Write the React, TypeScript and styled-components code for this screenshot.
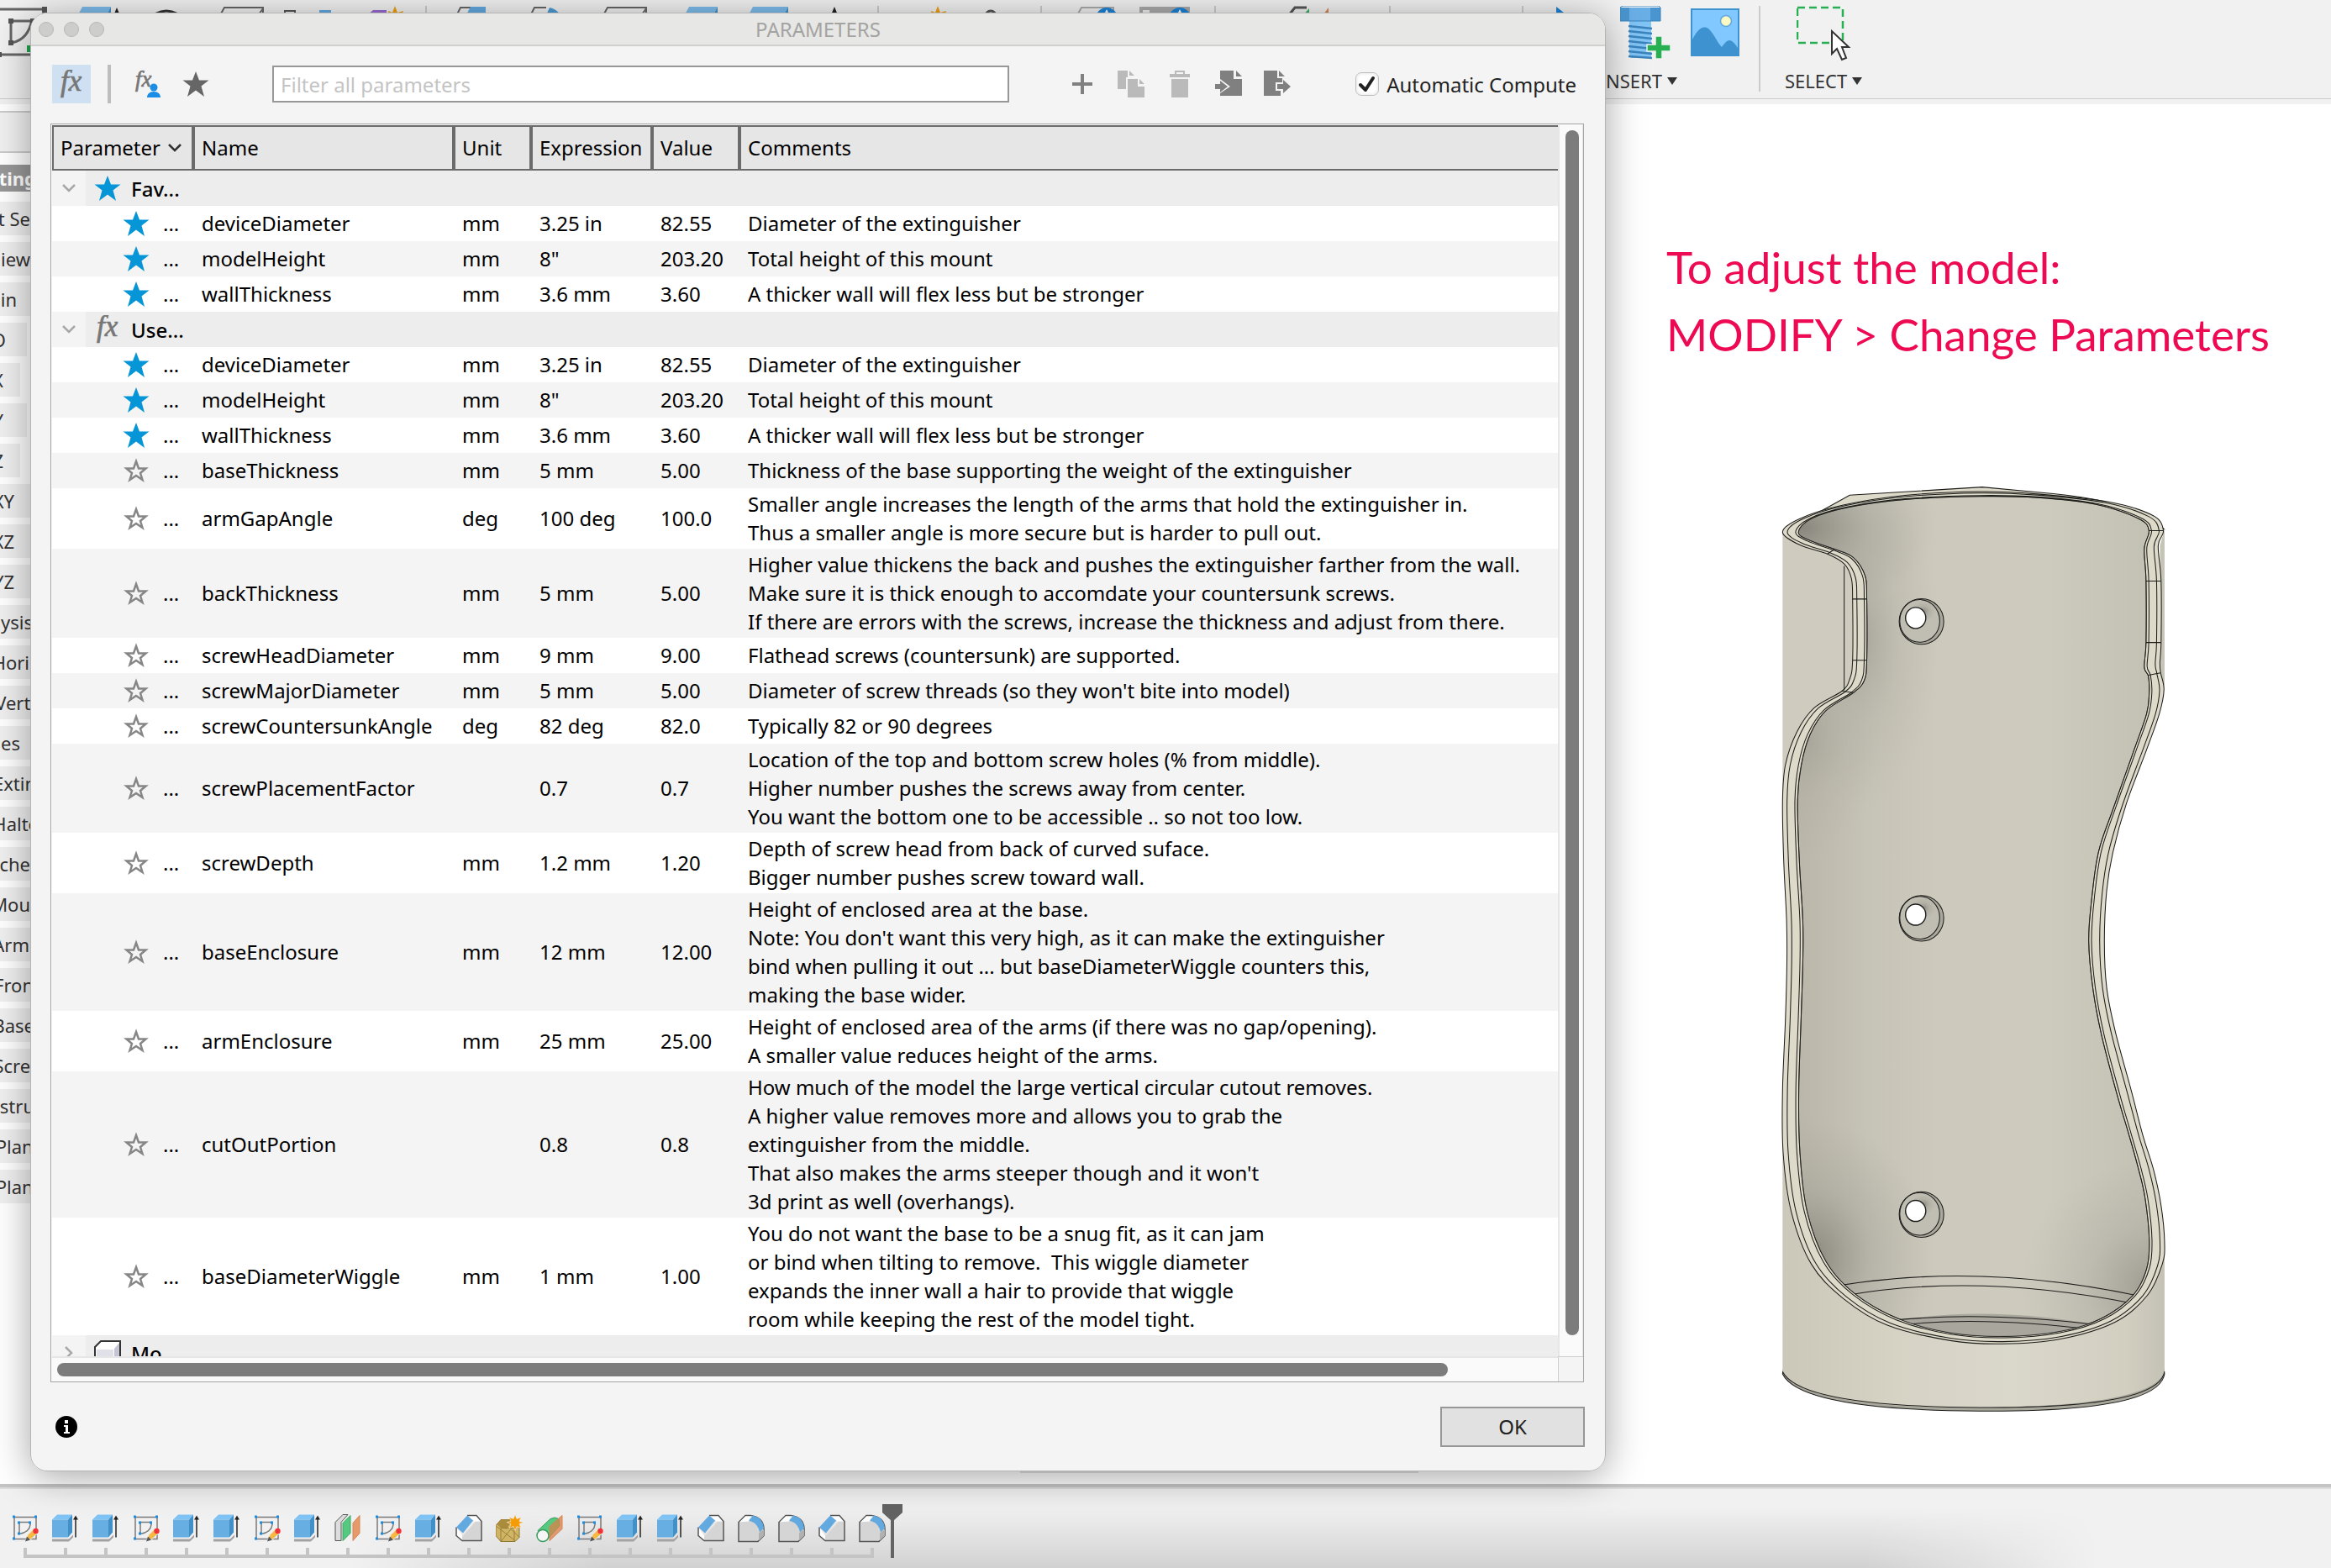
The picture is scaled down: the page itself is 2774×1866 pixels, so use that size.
import React from 'react';
import styled, { createGlobalStyle, css } from 'styled-components';

const sans = "'Noto Sans', 'Open Sans', sans-serif";

const GlobalStyle = createGlobalStyle`
  *, *::before, *::after { box-sizing: border-box; }
  html, body { margin: 0; height: 100%; overflow: hidden; }
  body { font-family: ${sans}; font-size: 22px; color: #000; background: #fff; }
  button, input { font: inherit; color: inherit; }
`;

/* ---------- application shell ---------- */

const Shell = styled.div`
  position: relative;
  display: flex;
  flex-direction: column;
  height: 100vh;
  overflow: hidden;
  background: #fff;
`;

const Ribbon = styled.header`
  display: flex;
  flex: none;
  height: 124px;
  background: linear-gradient(#f1f1f1 117px, #cbcbcb 117px, #cbcbcb 118px, #f1f1f1 118px);
`;

const HiddenTools = styled.div`
  display: flex;
  align-items: flex-start;
  width: 1911px;
  flex: none;
  padding-top: 7px;
  overflow: hidden;
  border-top: 0;
`;

const ToolIcon = styled.svg<{ $gap: number }>`
  flex: none;
  margin-left: ${(p) => p.$gap}px;
  display: block;
`;

const ToolGroup = styled.div<{ $divided?: boolean }>`
  display: flex;
  flex-direction: column;
  align-items: flex-start;
  height: 102px;
  margin-top: 7px;
  ${(p) =>
    p.$divided &&
    css`
      margin-left: 23px;
      padding-left: 29px;
      border-left: 2px solid #cbcbcb;
    `}
`;

const GroupIcons = styled.div<{ $indent: number }>`
  display: flex;
  gap: 22px;
  height: 76px;
  padding-left: ${(p) => p.$indent}px;
`;

const GroupMenu = styled.button`
  display: flex;
  align-items: center;
  gap: 6px;
  padding: 0;
  border: 0;
  background: none;
  color: #333;
  font-size: 22px;
  line-height: 26px;
`;

const Caret = styled.span`
  border: 6px solid transparent;
  border-top: 9px solid #333;
  border-bottom: 0;
`;

const Stage = styled.main`
  display: flex;
  flex: 1;
  min-height: 0;
`;

const Browser = styled.aside`
  display: flex;
  flex-direction: column;
  gap: 8px;
  width: 1911px;
  flex: none;
  padding-top: 8px;
`;

const BrowserBar = styled.div`
  height: 50px;
  margin-bottom: 6px;
  border: solid #cbcbcb;
  border-width: 2px 0;
  background: #f1f1f1;
`;

const BrowserNode = styled.div<{ $end: number; $active?: boolean; $width?: number }>`
  display: flex;
  width: ${(p) => p.$width ?? 60}px;
  height: ${(p) => (p.$active ? 32 : 40)}px;
  margin: ${(p) => (p.$active ? '0 0 4px' : 0)};
  overflow: hidden;
  background: ${(p) => (p.$active ? '#989898' : '#f0f0f0')};
  color: ${(p) => (p.$active ? '#fff' : '#333')};
  font-weight: ${(p) => (p.$active ? 700 : 400)};
  line-height: ${(p) => (p.$active ? 32 : 40)}px;

  span {
    display: flex;
    justify-content: flex-end;
    flex: none;
    width: ${(p) => p.$end}px;
    white-space: nowrap;
  }
`;

const Viewport = styled.section`
  flex: 1;
  padding: 154px 0 0 72px;
`;

const Annotation = styled.p`
  margin: 0;
  color: #ed0a53;
  font-family: Lato, sans-serif;
  font-size: 53px;
  line-height: 80px;
  white-space: nowrap;
`;

const ModelFrame = styled.div`
  width: 540px;
  margin: 122px 0 0 97px;
`;

/* ---------- timeline ---------- */

const Timeline = styled.footer`
  position: relative;
  flex: none;
  height: 100px;
  border-top: 4px solid #c4c4c4;
  background: linear-gradient(#dcdcdc 2px, #f1f1f1 2px);

  &::before {
    content: '';
    position: absolute;
    inset: 24px 0 0;
    background: linear-gradient(transparent, rgba(0, 0, 0, 0.13));
    mask-image: linear-gradient(90deg, transparent 15%, #000 26%, #000 80%, transparent 90%);
  }
`;

const TimelineTrack = styled.ol`
  position: relative;
  display: flex;
  margin: 0;
  padding: 32px 0 0 6px;
  list-style: none;
`;

const Feature = styled.li<{ $edge?: 'first' | 'last' }>`
  display: flex;
  flex-direction: column;
  align-items: center;
  gap: 6px;
  width: 48px;
  height: 52px;
  background: linear-gradient(#c4c4c4, #c4c4c4) no-repeat bottom
    ${(p) => (p.$edge === 'first' ? 'right' : 'left')} / ${(p) => (p.$edge ? '26px' : '100%')} 4px;

  &::after {
    content: '';
    width: 4px;
    height: 12px;
    background: #c4c4c4;
  }
`;

const Playhead = styled.li`
  width: 24px;
  height: 64px;
  margin: -12px 0 0 -12px;
`;

/* ---------- parameters window ---------- */

const Dialog = styled.section`
  position: absolute;
  z-index: 2;
  top: 15px;
  bottom: 115px;
  left: 36px;
  display: flex;
  flex-direction: column;
  width: 1875px;
  overflow: hidden;
  border: 1px solid #b4b4b4;
  border-radius: 20px;
  background: #f4f4f4;
  font-size: 24px;
`;

const DialogShadow = styled.div`
  position: absolute;
  z-index: 1;
  top: 15px;
  bottom: 115px;
  left: 36px;
  width: 1875px;
  border-radius: 20px;
  box-shadow: 0 6px 46px rgba(0, 0, 0, 0.36);
`;

const NavigationBar = styled.div`
  position: absolute;
  bottom: 113px;
  left: 1214px;
  width: 474px;
  height: 40px;
  background: #e2e2e2;
`;

const TitleBar = styled.header`
  display: grid;
  grid-template-columns: 1fr auto 1fr;
  align-items: center;
  flex: none;
  height: 39px;
  padding: 0 9px;
  border-bottom: 2px solid #d0d0cf;
  background: #e7e7e5;
`;

const Lights = styled.div`
  display: flex;
  gap: 12px;

  button {
    width: 18px;
    height: 18px;
    padding: 0;
    border: 1px solid #b7b7b6;
    border-radius: 50%;
    background: #cdcdcc;
  }
`;

const Title = styled.h1`
  margin: 0;
  color: #a3a3a2;
  font-size: 24px;
  font-weight: 400;
  line-height: 30px;
`;

const Toolbar = styled.div`
  display: flex;
  align-items: center;
  flex: none;
  height: 92px;
  padding: 0 34px 2px 25px;
`;

const IconButton = styled.button<{ $selected?: boolean }>`
  display: grid;
  place-items: center;
  width: 46px;
  height: 46px;
  padding: 0;
  border: 0;
  background: ${(p) => (p.$selected ? '#cee0f2' : 'transparent')};
`;

const ButtonRow = styled.div`
  display: flex;
  gap: 12px;
`;

const Divider = styled.span`
  width: 4px;
  height: 46px;
  margin: 0 20px;
  background: #bdbdbd;
`;

const Filter = styled.input`
  flex: 1;
  min-width: 0;
  height: 44px;
  margin: 0 64px 0 68px;
  padding: 0 8px;
  border: 2px solid #979797;
  border-radius: 0;
  outline: 0;
  background: #fff;

  &::placeholder { color: #c4c4c4; opacity: 1; }
`;

const CheckLabel = styled.label`
  display: flex;
  align-items: center;
  gap: 9px;
  margin-left: 70px;
  color: #222;
  white-space: nowrap;
`;

const CheckBox = styled.span`
  display: grid;

  > * { grid-area: 1 / 1; }

  input {
    appearance: none;
    width: 28px;
    height: 28px;
    margin: 0;
    border: 1px solid #bfbfbf;
    border-radius: 7px;
    background: #fff;
    box-shadow: inset 0 0 4px #ddd;
  }

  svg { visibility: hidden; pointer-events: none; }
  input:checked + svg { visibility: visible; }
`;

const TableFrame = styled.div`
  display: grid;
  flex: 1;
  grid-template-columns: 1fr 30px;
  grid-template-rows: 1fr 30px;
  min-height: 0;
  margin: 0 25px 0 23px;
  padding: 1px 0 0 1px;
  border: 1px solid #a4a4a4;
  background: #fafafa;
`;

const TableClip = styled.div`
  overflow: hidden;
  background: #fff;
`;

const Table = styled.table`
  width: 100%;
  table-layout: fixed;
  border-collapse: separate;
  border-spacing: 0;
`;

const HeadCell = styled.th<{ $width?: number; $last?: boolean }>`
  width: ${(p) => (p.$width ? `${p.$width}px` : 'auto')};
  height: 54px;
  padding: 0 0 0 8px;
  border: 2px solid #6b6b6b;
  ${(p) => p.$last && 'border-right: 0;'}
  background: #e6e6e6;
  font-weight: 400;
  line-height: 34px;
  text-align: left;
  white-space: nowrap;

  svg { margin-left: 8px; vertical-align: 0; }
`;

const GroupCell = styled.td`
  height: 42px;
  padding: 0;
  background: #ededed;
`;

const GroupLabel = styled.div`
  display: flex;
  align-items: center;
  height: 42px;
  font-weight: 500;
`;

const Toggle = styled.button`
  display: grid;
  place-items: center;
  width: 40px;
  height: 42px;
  margin-right: 10px;
  padding: 0;
  border: 0;
  background: #f4f4f4;
`;

const GroupName = styled.span`
  margin-left: 12px;
`;

const Row = styled.tr<{ $shaded: boolean }>`
  background: ${(p) => (p.$shaded ? '#f4f4f4' : '#fff')};
`;

const Cell = styled.td`
  height: 42px;
  padding: 2px 0 2px 10px;
  line-height: 34px;
  white-space: pre;
`;

const StarCell = styled(Cell)`
  padding-left: 84px;
`;

const StarLine = styled.div`
  display: flex;
  align-items: center;
  gap: 16px;
`;

const StarButton = styled.button`
  display: block;
  width: 32px;
  height: 32px;
  padding: 0;
  border: 0;
  background: none;

  svg { display: block; }
`;

const VerticalTrack = styled.div`
  padding: 6px 5px 25px 7px;
  border: solid #e6e6e6;
  border-width: 0 1px 0 2px;

  span {
    display: block;
    width: 16px;
    height: 100%;
    border-radius: 8px;
    background: #7c7c7c;
  }
`;

const HorizontalTrack = styled.div`
  padding: 6px;
  border-top: 2px solid #e6e6e6;

  span {
    display: block;
    width: 93%;
    height: 16px;
    border-radius: 8px;
    background: #7c7c7c;
  }
`;

const Corner = styled.div`
  border: 1px solid #cfcfcf;
  border-width: 1px 0 0 1px;
  background: #f4f4f4;
`;

const DialogFooter = styled.footer`
  display: flex;
  align-items: center;
  justify-content: space-between;
  flex: none;
  height: 105px;
  padding: 0 24px 0 28px;
`;

const OkButton = styled.button`
  width: 172px;
  height: 48px;
  border: 2px solid #979797;
  background: #e1e1e1;
  color: #222;
`;

/* ---------- icons ---------- */

const starPath = 'M16 1l4 10.500h11.500l-9 7L26 31l-10-7.500L6 31l3.500-12.500-9-7H12z';

const Star = ({ color }: { color: string }) => (
  <svg width="32" height="32" viewBox="0 0 32 32">
    <path d={starPath} fill={color} />
  </svg>
);

const StarOutline = () => (
  <svg width="32" height="32" viewBox="0 0 32 32">
    <path d="M16 5l3 8.500h8.500l-6.500 5.500 2.500 8-7.500-5-7.500 5 2.500-8-6.500-5.500H13z" fill="none" stroke="#868686" strokeWidth="2.500" />
  </svg>
);

const Fx = ({ user }: { user?: boolean }) => (
  <svg width="32" height="34" viewBox="0 0 32 34">
    <text x={user ? 2 : 3} y={user ? 20 : 25} fill="#777" stroke="#777" strokeWidth=".7" fontFamily="'Liberation Serif', serif" fontStyle="italic" fontSize={user ? 27 : 35}>
      fx
    </text>
    {user && (
      <g fill="#1a8ee6">
        <circle cx="24" cy="21" r="4.500" />
        <path d="M16 33c0-4 3-7 8-7s8 3 8 7z" />
      </g>
    )}
  </svg>
);

const Chevron = ({ right, color }: { right?: boolean; color: string }) => (
  <svg width="18" height="18" viewBox="0 0 18 18">
    <path d={right ? 'M5 2l7 7-7 7' : 'M2 5l7 7 7-7'} fill="none" stroke={color} strokeWidth="2.500" />
  </svg>
);

const Plus = () => (
  <svg width="32" height="32" viewBox="0 0 32 32">
    <path d="M16 4v24M4 16h24" stroke="#808080" strokeWidth="4" />
  </svg>
);

const Copy = () => (
  <svg width="32" height="32" viewBox="0 0 32 32" fill="#bababa">
    <path d="M0 0h12v8h-2v14H0zM14 0l6 6h-6zM12 10h12v9h8v13H12zM26 10l6 6h-6z" />
  </svg>
);

const Trash = () => (
  <svg width="32" height="32" viewBox="0 0 32 32" fill="#bababa">
    <path d="M4 4h6V0h12v4h6v4H4zm8-2v2h8V2zM6 10h20v22H6z" fillRule="evenodd" />
  </svg>
);

const Import = () => (
  <svg width="32" height="32" viewBox="0 0 32 32" fill="#808080">
    <path d="M6 0h16v10h10v20H6V27l12-8L6 10zM25 0l7 7h-7z" />
    <path d="M0 16h6v-4l9 7-9 7v-4H0z" />
  </svg>
);

const Export = () => (
  <svg width="32" height="32" viewBox="0 0 32 32" fill="#808080">
    <path d="M0 0h16v9h6v5h-8v10h6v6H0zM18 0l7 7h-7z" />
    <path d="M16 16h7v-5l9 8-9 8v-5h-7z" />
  </svg>
);

const Component = () => (
  <svg width="32" height="32" viewBox="0 0 32 32">
    <path d="M1 9l7-7h23v29H1z" fill="#fff" />
    <path d="M3 12h20v18H3z" fill="#dfe0e8" />
    <path d="M24 11l6-7v26h-6z" fill="#c3c5d4" />
    <path d="M1 31V9l7-7h23v29" fill="none" stroke="#333" strokeWidth="2" />
  </svg>
);

const Info = () => (
  <svg width="28" height="28" viewBox="0 0 28 28">
    <circle cx="14" cy="14" r="13" fill="#000" />
    <path d="M12 6h4v4h-4zM11 12h5v8h2v2h-7v-2h2v-6h-2z" fill="#fff" />
  </svg>
);

type FeatureKind = 'sketch' | 'extrude' | 'split' | 'chamfer' | 'fillet' | 'base' | 'cylinder';

const featureArt: Record<FeatureKind, React.ReactNode> = {
  sketch: (
    <>
      <path d="M3 3h26v26H3zM9 9h13v3q-1 9-13 11z" fill="none" stroke="#7a7a7a" strokeWidth="1.500" />
      <path d="M1 1h3v3H1zM27 1h3v3h-3zM1 27h3v3H1zM7 8h3v3H7zM20 8h3v3h-3zM7 21h3v3H7z" fill="#1a8ee6" />
      <path d="M16 32l3-8 7-7 5 5-8 7z" fill="#f5b945" stroke="#f1f1f1" />
      <path d="M16 32l2-6 4 4z" fill="#555" />
      <circle cx="28.500" cy="19.500" r="3.200" fill="#f3303a" />
    </>
  ),
  extrude: (
    <>
      <path d="M0 29v3h20l5-5v-3l-5 5z" fill="#a3a3a3" />
      <path d="M0 6l6-6h18l-5 6z" fill="#80c3f5" />
      <path d="M19 6l5-6v21l-5 6z" fill="#438fc7" />
      <path d="M0 6h19v21H0z" fill="#67aee3" />
      <path d="M28 27V4" stroke="#222" strokeWidth="1.500" />
      <path d="M25 6l3-5 3 5z" fill="#222" />
    </>
  ),
  split: (
    <>
      <path d="M1 31V9l9-9h6L8 9v22z" fill="#ddd" stroke="#555" />
      <path d="M10 31V10l9-9v21z" fill="#56c980" stroke="#3aa563" />
      <path d="M22 31V10l8-9v21z" fill="#e6996a" stroke="#d88452" />
    </>
  ),
  chamfer: (
    <>
      <path d="M8 31V26L24 8h7v23z" fill="#d5d5d5" />
      <path d="M1 15v10l7 6V25z" fill="#fff" />
      <path d="M14 1h11l6 7h-8l-8-6z" fill="#fff" />
      <path d="M1 15v10l7 6h23V8l-6-7H14" fill="none" stroke="#555" strokeWidth="1.500" />
      <path d="M1 15L14 1l7 6L9 22z" fill="#62a9e0" />
    </>
  ),
  fillet: (
    <>
      <path d="M1 32V9l8-8h6q15 2 16 15v9l-7 7z" fill="#d5d5d5" stroke="#555" strokeWidth="1.500" />
      <path d="M2 9l7-7h9l-5 6z" fill="#fff" />
      <path d="M13 7l5-6q12 3 13 15l-5 5Q24 10 13 7z" fill="#62a9e0" />
      <path d="M25 22l6-5v8l-6 6z" fill="#b0b0b0" />
    </>
  ),
  base: (
    <>
      <path d="M0 13l6-7h16l6 6v15l-5 5H6l-6-7z" fill="#d0b566" stroke="#8f762c" />
      <path d="M6 16l-5-5 6-5h13l-7 11z" fill="#a98d3d" />
      <path d="M6 16v16M1 14l22 17M6 32l12-15 10 10M22 16v15M6 16h16l6-4" fill="none" stroke="#9a8034" />
      <path d="M23 0l2 5 5-2-2 5 5 1-5 2 2 5-5-2-2 5-2-5-5 2 2-5-5-2 5-1-2-5 5 2z" fill="#f59b05" stroke="#f1f1f1" strokeWidth=".6" />
    </>
  ),
  cylinder: (
    <>
      <path d="M2 19L17 5q5-3 10 0l1 8-15 17z" fill="#56c980" stroke="#3a9c5e" />
      <circle cx="8" cy="25" r="7" fill="#f6f6f6" stroke="#3a9c5e" strokeWidth="1.500" />
      <path d="M16 31V14L31 1v16z" fill="#dc8049" fillOpacity=".75" stroke="#d88452" />
    </>
  ),
};

const timeline: FeatureKind[] = [
  'sketch', 'extrude', 'extrude', 'sketch', 'extrude', 'extrude', 'sketch', 'extrude', 'split', 'sketch', 'extrude',
  'chamfer', 'base', 'cylinder', 'sketch', 'extrude', 'extrude', 'chamfer', 'fillet', 'fillet', 'chamfer', 'fillet',
];

const prism = (
  <>
    <path d="M0 20L10 1h34L34 20z" fill="#7dbcec" />
    <path d="M34 20L44 1v19z" fill="#438fc7" />
  </>
);
const box = <path d="M1 20L11 2h46v18M45 20L57 3" fill="none" stroke="#666" strokeWidth="2" />;
const rule = <path d="M1 0v40" stroke="#cbcbcb" strokeWidth="2" />;
const burst = <path d="M8 0l3 8 7-2-5 14H3L0 6l5 2z" fill="#f0a010" />;

/* Ribbon icons whose tops show above the parameters window */
const ribbonTools: { gap: number; width: number; art: React.ReactNode }[] = [
  {
    gap: 0,
    width: 56,
    art: (
      <>
        <path d="M0 4h52v54H0M13 18h26M13 18v28M14 44q20-4 24-28" fill="none" stroke="#666" strokeWidth="3" />
        <path d="M50 1h6v7h-6zM10 15h6v6h-6zM10 41h6v6h-6zM0 55h2v6H0zM36 15h6v6h-6z" fill="#555" />
        <path d="M32 47h24v8H32z" fill="#23a44d" />
      </>
    ),
  },
  { gap: 32, width: 46, art: prism },
  { gap: 0, width: 10, art: <path d="M5 2l5 12H0z" fill="#222" /> },
  { gap: 26, width: 60, art: <path d="M2 20Q28-8 54 20" fill="none" stroke="#333" strokeWidth="3" /> },
  { gap: 26, width: 60, art: box },
  { gap: 22, width: 14, art: <path d="M1 20V6h12v14" fill="none" stroke="#555" strokeWidth="2" /> },
  { gap: 28, width: 14, art: <path d="M0 5h14v15H0z" fill="#62a9e0" /> },
  { gap: 42, width: 24, art: <path d="M0 12l8-7h16v15H0z" fill="#9a6bd0" /> },
  { gap: 2, width: 18, art: burst },
  { gap: 26, width: 2, art: rule },
  { gap: 30, width: 46, art: <><path d="M1 20L10 2h12" fill="none" stroke="#666" strokeWidth="2" /><path d="M12 20L22 1h18v19z" fill="#62a9e0" /></> },
  { gap: 42, width: 46, art: <><path d="M1 20L10 2h14" fill="none" stroke="#666" strokeWidth="2" /><path d="M20 20l8-18q12 2 17 18z" fill="#4c9bd6" /></> },
  { gap: 40, width: 60, art: box },
  { gap: 38, width: 46, art: prism },
  { gap: 30, width: 56, art: <><path d="M0 20L10 1h42L42 20z" fill="#7dbcec" /><path d="M42 20L52 1v19z" fill="#438fc7" /></> },
  { gap: 46, width: 10, art: <path d="M5 1l5 12H0z" fill="#222" /> },
  { gap: 46, width: 2, art: rule },
  { gap: 62, width: 18, art: burst },
  { gap: 46, width: 14, art: <circle cx="7" cy="12" r="6" fill="none" stroke="#555" strokeWidth="3" /> },
  { gap: 52, width: 2, art: rule },
  { gap: 36, width: 56, art: <><path d="M1 20L11 2h38v18" fill="none" stroke="#aaa" strokeWidth="2" /><circle cx="41" cy="15" r="13" fill="#1a83d8" /><path d="M41 4l4 8h-8z" fill="#fff" /></> },
  { gap: 24, width: 62, art: <><path d="M0 1h60v20H0z" fill="#aaa" /><path d="M4 5h8v5H4z" fill="#eee" /><circle cx="48" cy="15" r="13" fill="#1a83d8" /><path d="M48 4l4 8h-8z" fill="#fff" /></> },
  { gap: 27, width: 2, art: rule },
  { gap: 85, width: 52, art: <><path d="M1 12L9 2h14" fill="none" stroke="#555" strokeWidth="3" /><path d="M16 14L26 3v12z" fill="#40b060" /><path d="M40 14l9-12v14z" fill="#d88452" /></> },
  { gap: 69, width: 2, art: rule },
  { gap: 156, width: 2, art: rule },
  { gap: 39, width: 18, art: <path d="M0 1l18 14H0z" fill="#1a83d8" /> },
];

const Bolt = () => (
  <svg width="62" height="64" viewBox="0 0 62 64">
    <path d="M0 2h48v16H0z" fill="#4a95cf" />
    <path d="M11 2h25v16H11z" fill="#69aee5" />
    <path d="M11 18h26v44H13l-2-4z" fill="#80c3f5" />
    <path d="M10 24l28 3M10 30l28 3M10 36l28 3M10 42l28 3M10 48l28 3M10 54l28 3M10 60l28 2" stroke="#3b83bb" strokeWidth="2.500" />
    <path d="M0 18V2l3-2h43l2 2v16z" fill="none" stroke="#3b83bb" />
    <path d="M42 36h8v10h10v8H50v9h-8v-9H32v-8h10z" fill="#27b052" stroke="#f1f1f1" strokeWidth="1.500" />
  </svg>
);

const Picture = () => (
  <svg width="58" height="64" viewBox="0 0 58 64">
    <path d="M1 4h56v55H1z" fill="#80c8ff" stroke="#3d92cf" strokeWidth="2" />
    <circle cx="42" cy="18" r="6.500" fill="#fbf9c4" stroke="#65a9dc" strokeWidth="1.500" />
    <path d="M1 42c6-12 12-20 20-15 7 6 10 16 16 22 4-5 7-10 12-7 4 3 6 6 8 10v8H1z" fill="#3d92cf" />
  </svg>
);

const SelectArt = () => (
  <svg width="66" height="70" viewBox="0 0 66 70">
    <path d="M1 2h54v42H1z" fill="none" stroke="#27b052" strokeWidth="2.500" strokeDasharray="9 5" />
    <path d="M42 30v27l6-6 6 13 5-2-5-13h8z" fill="#fff" stroke="#333" strokeWidth="2" />
  </svg>
);

/* ---------- model drawing ---------- */

type Pt = [number, number];

// Catmull-Rom spline through the given points
const smooth = (pts: Pt[], closed = false): string => {
  const n = pts.length;
  const at = (i: number): Pt => (closed ? pts[(i + n) % n] : pts[Math.max(0, Math.min(n - 1, i))]);
  let d = `M${pts[0][0]} ${pts[0][1]}`;
  for (let i = 0; i < (closed ? n : n - 1); i += 1) {
    const [a, b, c, e] = [at(i - 1), at(i), at(i + 1), at(i + 2)];
    d += `C${b[0] + (c[0] - a[0]) / 6} ${b[1] + (c[1] - a[1]) / 6} ${c[0] - (e[0] - b[0]) / 6} ${c[1] - (e[1] - b[1]) / 6} ${c[0]} ${c[1]}`;
  }
  return closed ? `${d}Z` : d;
};

// Each row: outer rim x, y then inner rim x, y
const rim = [
  [120, 205, 175, 205], [180, 248, 212, 232], [275, 278, 300, 262], [334, 312, 365, 290], [358, 360, 405, 350],
  [362, 428, 411, 428], [362, 632, 411, 632], [352, 695, 402, 700], [325, 735, 365, 740], [230, 790, 270, 800],
  [170, 870, 215, 880], [130, 980, 185, 980], [120, 1100, 172, 1100], [124, 1300, 178, 1300], [134, 1500, 190, 1500],
  [135, 1640, 190, 1640], [130, 1827, 184, 1827], [120, 2065, 176, 2065], [122, 2272, 180, 2272], [150, 2469, 205, 2469],
  [220, 2645, 270, 2635], [330, 2759, 370, 2743], [480, 2847, 520, 2826], [700, 2899, 700, 2873], [880, 2910, 890, 2885],
  [1080, 2894, 1080, 2868], [1270, 2837, 1220, 2826], [1380, 2749, 1330, 2749], [1432, 2645, 1378, 2660], [1440, 2570, 1387, 2560],
  [1428, 2449, 1372, 2420], [1402, 2330, 1348, 2320], [1365, 2215, 1316, 2210], [1325, 2066, 1275, 2076], [1270, 1870, 1222, 1880],
  [1240, 1723, 1192, 1723], [1232, 1568, 1178, 1568], [1240, 1400, 1188, 1430], [1262, 1270, 1212, 1270], [1308, 1110, 1265, 1120],
  [1378, 930, 1335, 930], [1422, 810, 1378, 810], [1438, 730, 1387, 740], [1426, 672, 1384, 685], [1424, 640, 1370, 655],
  [1428, 573, 1376, 573], [1428, 368, 1376, 368], [1418, 250, 1370, 260], [1436, 200, 1386, 200], [1400, 150, 1350, 160],
  [1250, 105, 1200, 112], [1000, 78, 1000, 90], [800, 70, 800, 86], [550, 82, 550, 96], [330, 115, 350, 122], [180, 160, 220, 160],
];

const ring = (t: number): Pt[] => rim.map(([ox, oy, ix, iy]) => [ox + (ix - ox) * t, oy + (iy - oy) * t]);
const outer = ring(0);
const inner = ring(1);
const innerPath = smooth(inner, true);

const MountModel = () => (
  <svg width="100%" viewBox="0 0 540 1140" role="img" aria-label="Extinguisher mount model">
    <defs>
      <linearGradient id="wall" x1="0" x2="1">
        <stop offset="0" stopColor="#cbc8ba" />
        <stop offset=".3" stopColor="#d6d3c5" />
        <stop offset=".6" stopColor="#dad8cb" />
        <stop offset=".9" stopColor="#d2cfc1" />
        <stop offset="1" stopColor="#c4c2b4" />
      </linearGradient>
      <linearGradient id="cavity" x1="0" x2="1">
        <stop offset="0" stopColor="#bab7aa" />
        <stop offset=".2" stopColor="#c6c3b7" />
        <stop offset=".4" stopColor="#cdcabd" />
        <stop offset=".7" stopColor="#cdcbbe" />
        <stop offset="1" stopColor="#c3c1b4" />
      </linearGradient>
      <radialGradient id="shade">
        <stop offset="0" stopColor="#6f6c66" stopOpacity=".65" />
        <stop offset=".5" stopColor="#8a877f" stopOpacity=".25" />
        <stop offset="1" stopColor="#8f8c84" stopOpacity="0" />
      </radialGradient>
      <clipPath id="inside"><path d={innerPath} /></clipPath>
    </defs>
    <g transform="scale(.34439 .35714)" fill="none" stroke="#1c1c1a" strokeWidth="3">
      <path d="M120 3010Q180 3130 800 3134T1440 3010L1436 2990H124z" fill="#a9a79c" />
      <path d="M120 205L300 110L352 82L810 55L1000 72Q1360 100 1438 195L1300 160L800 110L300 160z" fill="#dedaca" />
      <path d={`${smooth(outer.slice(17, 30))}L1440 3002Q1400 3118 800 3122T120 3002Z`} fill="url(#wall)" stroke="none" />
      <path d="M120 3002Q180 3118 800 3122T1440 3002" />
      <path d={`${smooth(outer.slice(0, 13))}Z`} fill="#cfccbf" stroke="none" />
      <path d="M1440 195V720L1426 672L1424 250z" fill="#c6c4b7" stroke="none" />
      <path d={smooth(outer, true)} fill="#dedaca" />
      <path d="M333 318V732" />
      <path d={innerPath} fill="url(#cavity)" />
      <g clipPath="url(#inside)">
        <ellipse cx="190" cy="190" rx="460" ry="280" fill="url(#shade)" stroke="none" />
        <ellipse cx="400" cy="560" rx="260" ry="560" fill="url(#shade)" stroke="none" opacity=".5" />
        <ellipse cx="200" cy="900" rx="260" ry="380" fill="url(#shade)" stroke="none" opacity=".4" />
        <ellipse cx="220" cy="2620" rx="420" ry="460" fill="url(#shade)" stroke="none" />
        <ellipse cx="1400" cy="2720" rx="460" ry="420" fill="url(#shade)" stroke="none" opacity=".7" />
        <path d="M480 2840Q800 2775 1230 2850V2940H480z" fill="#a9a69d" stroke="none" />
        <path d="M300 2718Q800 2636 1360 2752M340 2748Q800 2672 1340 2777M480 2834Q800 2798 1220 2848M500 2850Q800 2814 1220 2866" />
      </g>
      <path d={smooth(ring(0.3), true)} />
      <path d={smooth(ring(0.82), true)} />
      <path d={smooth(inner, true)} strokeWidth="2" />
      <path d="M362 428H411M362 632H411M1376 368H1428M1376 573H1428M275 278L300 262M325 735L365 740M1384 682L1426 674M1386 200H1436" />
      {[503, 1492, 2479].map((y) => (
        <g key={y}>
          <ellipse cx="600" cy={y} rx="77" ry="76" fill="#aaa89d" />
          <ellipse cx="594" cy={y - 2} rx="69" ry="71" fill="#c0beb2" />
          <ellipse cx="607" cy={y - 34} rx="42" ry="34" fill="url(#shade)" stroke="none" />
          <circle cx="580" cy={y - 12} r="35" fill="#fff" strokeWidth="4" />
        </g>
      ))}
    </g>
  </svg>
);

/* ---------- data ---------- */

type Parameter = { name: string; unit: string; expression: string; value: string; comment: string; favorite?: boolean };

const favorites: Parameter[] = [
  { name: 'deviceDiameter', unit: 'mm', expression: '3.25 in', value: '82.55', comment: 'Diameter of the extinguisher', favorite: true },
  { name: 'modelHeight', unit: 'mm', expression: '8"', value: '203.20', comment: 'Total height of this mount', favorite: true },
  { name: 'wallThickness', unit: 'mm', expression: '3.6 mm', value: '3.60', comment: 'A thicker wall will flex less but be stronger', favorite: true },
];

const userParameters: Parameter[] = [
  ...favorites,
  { name: 'baseThickness', unit: 'mm', expression: '5 mm', value: '5.00', comment: 'Thickness of the base supporting the weight of the extinguisher' },
  { name: 'armGapAngle', unit: 'deg', expression: '100 deg', value: '100.0', comment: 'Smaller angle increases the length of the arms that hold the extinguisher in.\nThus a smaller angle is more secure but is harder to pull out.' },
  { name: 'backThickness', unit: 'mm', expression: '5 mm', value: '5.00', comment: 'Higher value thickens the back and pushes the extinguisher farther from the wall.\nMake sure it is thick enough to accomdate your countersunk screws.\nIf there are errors with the screws, increase the thickness and adjust from there.' },
  { name: 'screwHeadDiameter', unit: 'mm', expression: '9 mm', value: '9.00', comment: 'Flathead screws (countersunk) are supported.' },
  { name: 'screwMajorDiameter', unit: 'mm', expression: '5 mm', value: '5.00', comment: "Diameter of screw threads (so they won't bite into model)" },
  { name: 'screwCountersunkAngle', unit: 'deg', expression: '82 deg', value: '82.0', comment: 'Typically 82 or 90 degrees' },
  { name: 'screwPlacementFactor', unit: '', expression: '0.7', value: '0.7', comment: 'Location of the top and bottom screw holes (% from middle).\nHigher number pushes the screws away from center.\nYou want the bottom one to be accessible .. so not too low.' },
  { name: 'screwDepth', unit: 'mm', expression: '1.2 mm', value: '1.20', comment: 'Depth of screw head from back of curved suface.\nBigger number pushes screw toward wall.' },
  { name: 'baseEnclosure', unit: 'mm', expression: '12 mm', value: '12.00', comment: "Height of enclosed area at the base.\nNote: You don't want this very high, as it can make the extinguisher\nbind when pulling it out ... but baseDiameterWiggle counters this,\nmaking the base wider." },
  { name: 'armEnclosure', unit: 'mm', expression: '25 mm', value: '25.00', comment: 'Height of enclosed area of the arms (if there was no gap/opening).\nA smaller value reduces height of the arms.' },
  { name: 'cutOutPortion', unit: '', expression: '0.8', value: '0.8', comment: "How much of the model the large vertical circular cutout removes.\nA higher value removes more and allows you to grab the\nextinguisher from the middle.\nThat also makes the arms steeper though and it won't\n3d print as well (overhangs)." },
  { name: 'baseDiameterWiggle', unit: 'mm', expression: '1 mm', value: '1.00', comment: 'You do not want the base to be a snug fit, as it can jam\nor bind when tilting to remove.  This wiggle diameter\nexpands the inner wall a hair to provide that wiggle\nroom while keeping the rest of the model tight.' },
];

const browserNodes: { label: string; end: number; width?: number }[] = [
  { label: 't Se', end: 36 }, { label: 'iew', end: 36 }, { label: 'in', end: 20 },
  { label: 'O', end: 7, width: 32 }, { label: 'X', end: 4, width: 24 }, { label: 'Y', end: 4, width: 32 }, { label: 'Z', end: 4, width: 24 },
  { label: 'XY', end: 17 }, { label: 'XZ', end: 17 }, { label: 'YZ', end: 17 }, { label: 'ysis', end: 39 },
  { label: 'Hori', end: 35 }, { label: 'Verti', end: 42 }, { label: 'es', end: 24 }, { label: 'Extin', end: 43 },
  { label: 'Halte', end: 46 }, { label: 'che', end: 36 }, { label: 'Mou', end: 36 }, { label: 'Arm', end: 35 },
  { label: 'Fron', end: 40 }, { label: 'Base', end: 41 }, { label: 'Screw', end: 53 }, { label: 'stru', end: 41 },
  { label: 'Plane', end: 52 }, { label: 'Plane', end: 52 },
];

const ParameterRows = ({ items }: { items: Parameter[] }) => (
  <>
    {items.map((p, i) => (
      <Row key={p.name} $shaded={i % 2 === 1}>
        <StarCell>
          <StarLine>
            <StarButton aria-label={`Favorite ${p.name}`}>{p.favorite ? <Star color="#0696d7" /> : <StarOutline />}</StarButton>
            ...
          </StarLine>
        </StarCell>
        <Cell>{p.name}</Cell>
        <Cell>{p.unit}</Cell>
        <Cell>{p.expression}</Cell>
        <Cell>{p.value}</Cell>
        <Cell>{p.comment}</Cell>
      </Row>
    ))}
  </>
);

const GroupRow = ({ icon, name, collapsed }: { icon: React.ReactNode; name: string; collapsed?: boolean }) => (
  <tr>
    <GroupCell colSpan={6}>
      <GroupLabel>
        <Toggle aria-label={`Toggle ${name}`}>
          <Chevron right={collapsed} color="#a8a8a8" />
        </Toggle>
        {icon}
        <GroupName>{name}</GroupName>
      </GroupLabel>
    </GroupCell>
  </tr>
);

const ParametersDialog = () => (
  <Dialog role="dialog" aria-label="Parameters">
    <TitleBar>
      <Lights>
        <button aria-label="Close" />
        <button aria-label="Minimize" />
        <button aria-label="Zoom" />
      </Lights>
      <Title>PARAMETERS</Title>
    </TitleBar>
    <Toolbar>
      <IconButton $selected aria-label="All parameters"><Fx /></IconButton>
      <Divider />
      <ButtonRow>
        <IconButton aria-label="User parameters"><Fx user /></IconButton>
        <IconButton aria-label="Favorites"><Star color="#666" /></IconButton>
      </ButtonRow>
      <Filter placeholder="Filter all parameters" aria-label="Filter all parameters" />
      <ButtonRow>
        <IconButton aria-label="Add"><Plus /></IconButton>
        <IconButton aria-label="Copy"><Copy /></IconButton>
        <IconButton aria-label="Delete"><Trash /></IconButton>
        <IconButton aria-label="Import"><Import /></IconButton>
        <IconButton aria-label="Export"><Export /></IconButton>
      </ButtonRow>
      <CheckLabel htmlFor="auto-compute">
        <CheckBox>
          <input id="auto-compute" type="checkbox" defaultChecked />
          <svg width="28" height="28" viewBox="0 0 28 28">
            <path d="M6 15l6 6 9-14" fill="none" stroke="#222" strokeWidth="4" strokeLinecap="round" strokeLinejoin="round" />
          </svg>
        </CheckBox>
        Automatic Compute
      </CheckLabel>
    </Toolbar>
    <TableFrame>
      <TableClip>
        <Table>
          <thead>
            <tr>
              <HeadCell $width={168}>Parameter<Chevron color="#333" /></HeadCell>
              <HeadCell $width={310}>Name</HeadCell>
              <HeadCell $width={92}>Unit</HeadCell>
              <HeadCell $width={144}>Expression</HeadCell>
              <HeadCell $width={104}>Value</HeadCell>
              <HeadCell $last>Comments</HeadCell>
            </tr>
          </thead>
          <tbody>
            <GroupRow icon={<Star color="#0696d7" />} name="Fav..." />
            <ParameterRows items={favorites} />
            <GroupRow icon={<Fx />} name="Use..." />
            <ParameterRows items={userParameters} />
            <GroupRow icon={<Component />} name="Mo..." collapsed />
          </tbody>
        </Table>
      </TableClip>
      <VerticalTrack><span /></VerticalTrack>
      <HorizontalTrack><span /></HorizontalTrack>
      <Corner />
    </TableFrame>
    <DialogFooter>
      <Info />
      <OkButton>OK</OkButton>
    </DialogFooter>
  </Dialog>
);

export default function App() {
  return (
    <>
      <GlobalStyle />
      <Shell>
        <Ribbon>
          <HiddenTools>
            {ribbonTools.map((t, i) => (
              <ToolIcon key={i} $gap={t.gap} width={t.width} height="62" viewBox={`0 0 ${t.width} 62`}>
                {t.art}
              </ToolIcon>
            ))}
          </HiddenTools>
          <ToolGroup>
            <GroupIcons $indent={17}>
              <Bolt />
              <Picture />
            </GroupIcons>
            <GroupMenu>NSERT<Caret /></GroupMenu>
          </ToolGroup>
          <ToolGroup $divided>
            <GroupIcons $indent={14}>
              <SelectArt />
            </GroupIcons>
            <GroupMenu>SELECT<Caret /></GroupMenu>
          </ToolGroup>
        </Ribbon>
        <Stage>
          <Browser>
            <BrowserBar />
            <BrowserNode $end={43} $active><span>ting</span></BrowserNode>
            {browserNodes.map((n, i) => (
              <BrowserNode key={i} $end={n.end} $width={n.width}><span>{n.label}</span></BrowserNode>
            ))}
          </Browser>
          <Viewport>
            <Annotation>To adjust the model:</Annotation>
            <Annotation>MODIFY &gt; Change Parameters</Annotation>
            <ModelFrame><MountModel /></ModelFrame>
          </Viewport>
        </Stage>
        <NavigationBar />
        <Timeline>
          <TimelineTrack>
            {timeline.map((kind, i) => (
              <Feature key={i} $edge={i === 0 ? 'first' : i === timeline.length - 1 ? 'last' : undefined}>
                <svg width="32" height="34" viewBox="0 0 32 33">{featureArt[kind]}</svg>
              </Feature>
            ))}
            <Playhead>
              <svg width="24" height="64" viewBox="0 0 24 64">
                <path d="M0 0h24v10l-10 9v45h-4V19L0 10z" fill="#636363" />
              </svg>
            </Playhead>
          </TimelineTrack>
        </Timeline>
        <DialogShadow />
        <ParametersDialog />
      </Shell>
    </>
  );
}
